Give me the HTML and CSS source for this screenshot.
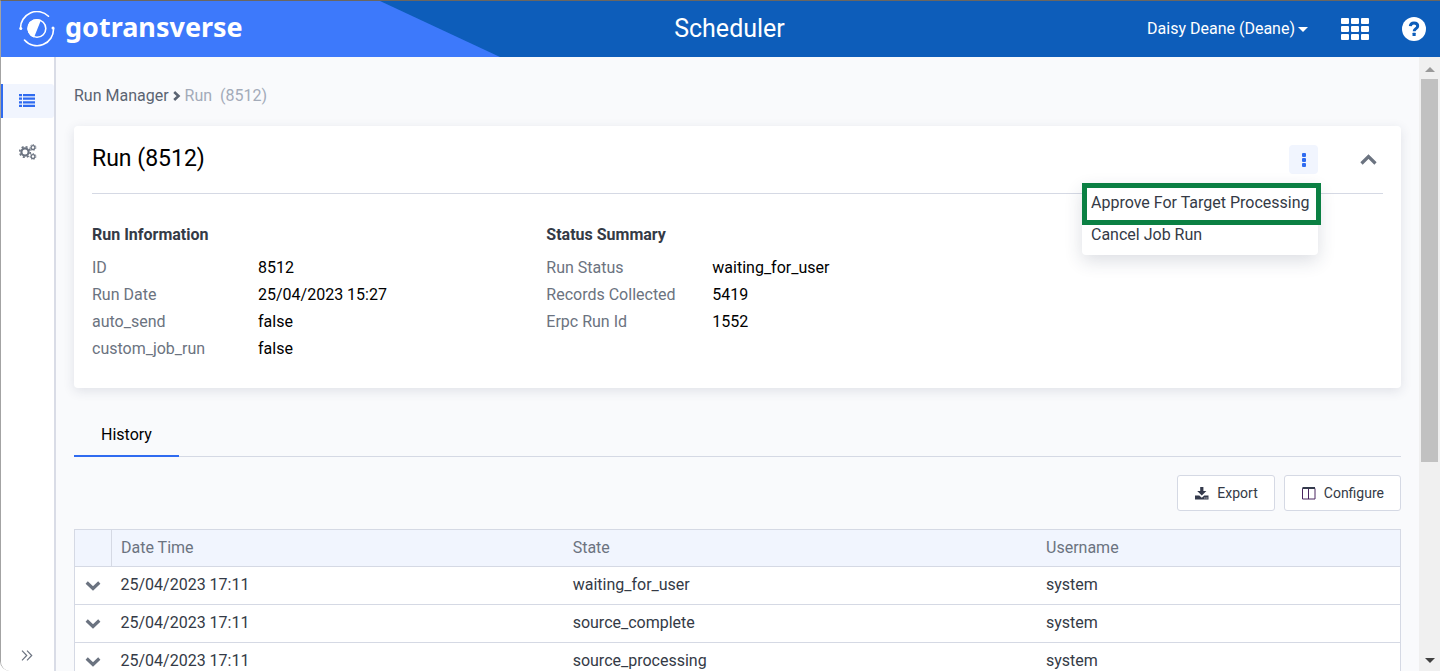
FILE: index.html
```html
<!DOCTYPE html>
<html lang="en">
<head>
<meta charset="utf-8">
<title>Scheduler</title>
<link rel="stylesheet" href="styles.css">
</head>
<body>
<div class="app">
  <header class="topbar">
    <a class="brand" href="#" aria-label="gotransverse">
      <svg class="brand-mark" viewBox="0 0 36 36" fill="none" stroke="#fff" stroke-width="1.6" stroke-linecap="round">
        <path d="M1.500 17.500A16.500 16.500 0 0 1 29.500 5.200"/>
        <path d="M34.500 17.500A16.500 16.500 0 0 1 5.500 29"/>
        <circle cx="1.800" cy="17.500" r="1.500" fill="#fff" stroke="none"/>
        <circle cx="34" cy="17" r="1.500" fill="#fff" stroke="none"/>
        <circle cx="18" cy="17.500" r="8.800"/>
        <path d="M22 8.900A9.500 9.500 0 1 0 15 26.500Z" fill="#fff" stroke="none"/>
      </svg>
      <span class="brand-name">gotransverse</span>
    </a>
    <h1 class="app-title">Scheduler</h1>
    <div class="topbar-tools">
      <button class="user-button" type="button">Daisy Deane (Deane)<span class="caret"></span></button>
      <button class="icon-button" type="button" aria-label="Applications">
        <svg width="28" height="22" viewBox="0 0 28 22" fill="#fff">
          <rect width="8" height="6" rx="1"/><rect x="10" width="8" height="6" rx="1"/><rect x="20" width="8" height="6" rx="1"/>
          <rect y="8" width="8" height="6" rx="1"/><rect x="10" y="8" width="8" height="6" rx="1"/><rect x="20" y="8" width="8" height="6" rx="1"/>
          <rect y="16" width="8" height="6" rx="1"/><rect x="10" y="16" width="8" height="6" rx="1"/><rect x="20" y="16" width="8" height="6" rx="1"/>
        </svg>
      </button>
      <button class="icon-button" type="button" aria-label="Help">
        <svg width="24" height="24" viewBox="0 0 24 24">
          <circle cx="12" cy="12" r="12" fill="#fff"/>
          <path d="M8.300 9.200C8.500 6.800 10 5.900 12 5.900c2.200 0 3.700 1.300 3.700 3.100 0 2.600-3.500 2.700-3.500 5.200" fill="none" stroke="#0d5dba" stroke-width="3"/>
          <rect x="10.500" y="15.700" width="3.200" height="3.200" rx=".5" fill="#0d5dba"/>
        </svg>
      </button>
    </div>
  </header>

  <div class="body">
    <nav class="sidebar" aria-label="Main">
      <div class="side-links">
        <a class="side-link active" href="#" aria-label="Runs">
          <svg width="16" height="13" viewBox="0 0 16 13" fill="#2f6bf0">
            <path d="M0 0h3v2.200H0zM4 0h12v2.200H4zM0 3.600h3v2.200H0zM4 3.600h12v2.200H4zM0 7.200h3v2.200H0zM4 7.200h12v2.200H4zM0 10.800h3V13H0zM4 10.800h12V13H4z"/>
          </svg>
        </a>
        <a class="side-link" href="#" aria-label="Settings">
          <svg width="18" height="16" viewBox="0 0 18 16" fill="none" stroke="#6b7380">
            <circle cx="6" cy="8" r="3.600" stroke-width="2.200"/>
            <circle cx="6" cy="8" r="5.300" stroke-width="1.600" stroke-dasharray="2.080 2.080"/>
            <circle cx="14" cy="3.500" r="1.900" stroke-width="1.300"/>
            <circle cx="14" cy="3.500" r="2.900" stroke-width="1" stroke-dasharray="1.300 1.300"/>
            <circle cx="14" cy="12.500" r="1.900" stroke-width="1.300"/>
            <circle cx="14" cy="12.500" r="2.900" stroke-width="1" stroke-dasharray="1.300 1.300"/>
          </svg>
        </a>
      </div>
      <button class="side-expand" type="button" aria-label="Expand menu">
        <svg width="12" height="11" viewBox="0 0 12 11" fill="none" stroke="#6b7380" stroke-width="1.200"><path d="M1 .7l4.700 4.800L1 10.300M6 .7l4.700 4.800L6 10.300"/></svg>
      </button>
    </nav>

    <main class="content">
      <nav class="breadcrumb" aria-label="Breadcrumb">
        <a href="#">Run Manager</a>
        <svg width="8" height="10" viewBox="0 0 8 10" fill="none" stroke="#5b6472" stroke-width="2.600"><path d="M1.200 1l4.300 4-4.300 4"/></svg>
        <span class="current">Run &nbsp;(8512)</span>
      </nav>

      <section class="card">
        <div class="card-head">
          <h2>Run (8512)</h2>
          <div class="card-tools">
            <div class="menu-wrap">
              <button class="kebab" type="button" aria-label="Actions">
                <svg width="4" height="14" viewBox="0 0 4 14" fill="#2f6bf0"><rect width="4" height="4" rx="1"/><rect y="5" width="4" height="4" rx="1"/><rect y="10" width="4" height="4" rx="1"/></svg>
              </button>
              <div class="menu">
                <button class="menu-item highlighted" type="button">Approve For Target Processing</button>
                <button class="menu-item" type="button">Cancel Job Run</button>
              </div>
            </div>
            <button class="collapse" type="button" aria-label="Collapse">
              <svg width="17" height="11" viewBox="0 0 17 11" fill="none" stroke="#6b7380" stroke-width="3.200"><path d="M1.500 9.500l7-7 7 7"/></svg>
            </button>
          </div>
        </div>
        <div class="summary">
          <div>
            <h3>Run Information</h3>
            <dl>
              <dt>ID</dt><dd>8512</dd>
              <dt>Run Date</dt><dd>25/04/2023 15:27</dd>
              <dt>auto_send</dt><dd>false</dd>
              <dt>custom_job_run</dt><dd>false</dd>
            </dl>
          </div>
          <div>
            <h3>Status Summary</h3>
            <dl>
              <dt>Run Status</dt><dd>waiting_for_user</dd>
              <dt>Records Collected</dt><dd>5419</dd>
              <dt>Erpc Run Id</dt><dd>1552</dd>
            </dl>
          </div>
        </div>
      </section>

      <div class="tabs" role="tablist">
        <button class="tab" type="button" role="tab" aria-selected="true">History</button>
      </div>

      <div class="actions">
        <button class="action" type="button">
          <svg width="14" height="13" viewBox="0 0 14 13" fill="#343a4c"><path d="M5.200 0h3.200v4h3L6.800 8.500 2.200 4h3z"/><path fill-rule="evenodd" d="M0 8.600h4.300l2.500 2.200 2.500-2.200H13.500V12.500H0zM9.400 10.500v1h1v-1zM11.400 10.500v1h1v-1z"/></svg>
          Export
        </button>
        <button class="action" type="button">
          <svg width="14" height="13" viewBox="0 0 14 13" fill="none" stroke="#4a2660"><path d="M.5 1.500h12.500v10.500H.5zM6.500 1.500V12"/><path d="M.5 1h12.500" stroke="#343a4c" stroke-width="2"/></svg>
          Configure
        </button>
      </div>

      <table class="grid">
        <colgroup><col class="col-toggle"><col class="col-date"><col class="col-state"><col></colgroup>
        <thead>
          <tr><th class="toggle-head"></th><th>Date Time</th><th>State</th><th>Username</th></tr>
        </thead>
        <tbody>
          <tr><td class="toggle"><button type="button" aria-label="Expand row"><svg width="16" height="10" viewBox="0 0 16 10" fill="none" stroke="#6b7380" stroke-width="3.200"><path d="M1.700 1.500L8 7.500l6.300-6"/></svg></button></td><td>25/04/2023 17:11</td><td>waiting_for_user</td><td>system</td></tr>
          <tr><td class="toggle"><button type="button" aria-label="Expand row"><svg width="16" height="10" viewBox="0 0 16 10" fill="none" stroke="#6b7380" stroke-width="3.200"><path d="M1.700 1.500L8 7.500l6.300-6"/></svg></button></td><td>25/04/2023 17:11</td><td>source_complete</td><td>system</td></tr>
          <tr><td class="toggle"><button type="button" aria-label="Expand row"><svg width="16" height="10" viewBox="0 0 16 10" fill="none" stroke="#6b7380" stroke-width="3.200"><path d="M1.700 1.500L8 7.500l6.300-6"/></svg></button></td><td>25/04/2023 17:11</td><td>source_processing</td><td>system</td></tr>
        </tbody>
      </table>
    </main>

    <div class="scrollbar" aria-hidden="true">
      <svg width="10" height="6" viewBox="0 0 10 6" fill="#9a9a9a"><path d="M0 6l5-5 5 5z"/></svg>
      <div class="track"><div class="thumb"></div></div>
      <svg width="10" height="6" viewBox="0 0 10 6" fill="#404040"><path d="M0 0l5 5 5-5z"/></svg>
    </div>
  </div>
</div>
</body>
</html>
```
FILE: styles.css
```css
* { box-sizing: border-box; }
html, body { height: 100%; }
body {
  margin: 0;
  overflow: hidden;
  background: #fff;
  color: #343a46;
  font: 16px/24px Roboto, "Liberation Sans", sans-serif;
}
h1, h2, h3, dl, dd { margin: 0; }
a { color: inherit; text-decoration: none; }
button {
  padding: 0;
  border: 0;
  background: none;
  color: inherit;
  font: inherit;
  cursor: pointer;
}
svg { display: block; flex: none; }

.app {
  display: flex;
  flex-direction: column;
  height: 100vh;
  margin-right: 2px;
  border-top: 1px solid #6b6660;
  border-left: 1px solid #a3a3a3;
  border-bottom-left-radius: 10px;
  overflow: hidden;
}

.topbar {
  display: grid;
  grid-template-columns: 1fr auto 1fr;
  align-items: center;
  flex: none;
  height: 56px;
  padding: 0 14px 0 18px;
  background: #0d5dba;
  color: #fff;
  position: relative;
}
.topbar::before {
  content: "";
  position: absolute;
  inset: 0 auto 0 0;
  width: 499px;
  background: #3d79fb;
  clip-path: polygon(0 0, 379px 0, 100% 100%, 0 100%);
}
.brand { display: flex; align-items: center; gap: 10px; position: relative; }
.brand-mark { width: 36px; height: 36px; }
.brand-name { padding-bottom: 4px; font: 700 27px/36px "Noto Sans", sans-serif; }
.app-title { padding-left: 14px; font-size: 25px; font-weight: 400; line-height: 32px; }
.topbar-tools { display: flex; align-items: center; justify-content: flex-end; gap: 33px; }
.user-button { display: flex; align-items: center; gap: 3px; }
.caret { border: 5px solid transparent; border-top-color: #fff; border-bottom: 0; }

.body { display: flex; flex: 1; min-height: 0; }

.sidebar {
  display: flex;
  flex-direction: column;
  justify-content: space-between;
  flex: none;
  width: 55px;
  padding: 27px 0 10px;
  border-right: 2px solid #d9dce6;
  background: #fff;
}
.side-links { display: grid; gap: 18px; }
.side-link {
  display: flex;
  align-items: center;
  height: 34px;
  padding: 0 0 2px 16px;
  border-left: 2px solid transparent;
}
.side-link.active { border-left-color: #2f6bf0; background: #f1f5fe; border-radius: 0 3px 3px 0; }
.side-expand { padding-left: 20px; }

.content {
  flex: 1;
  min-width: 0;
  padding: 27px 18px 0;
  background: #f9fafc;
  overflow: hidden;
}
.breadcrumb { display: flex; align-items: center; gap: 4px; margin-bottom: 18px; color: #5b6472; }
.breadcrumb .current { color: #a3abb9; }

.card {
  padding: 0 18px 25px;
  border-radius: 4px;
  background: #fff;
  box-shadow: 0 3px 12px rgba(40, 50, 80, .12);
}
.card-head {
  display: flex;
  align-items: center;
  justify-content: space-between;
  height: 68px;
  border-bottom: 1px solid #d5d9e4;
}
.card-head h2 { padding-bottom: 1px; color: #000; font-size: 23px; font-weight: 400; line-height: 32px; }
.card-tools { display: flex; align-items: center; gap: 42px; padding-right: 6px; }
.menu-wrap { position: relative; }
.kebab {
  display: flex;
  align-items: center;
  justify-content: center;
  width: 29px;
  height: 29px;
  border-radius: 4px;
  background: #f1f5fe;
}
.menu {
  position: absolute;
  top: 39px;
  right: 0;
  z-index: 2;
  width: 236px;
  padding: 3px 0 4px;
  border-radius: 4px;
  background: #fff;
  box-shadow: 0 6px 18px rgba(40, 50, 80, .16);
}
.menu-item {
  display: block;
  position: relative;
  width: 100%;
  height: 32px;
  padding: 0 9px;
  text-align: left;
  white-space: nowrap;
}
.menu-item.highlighted::after {
  content: "";
  position: absolute;
  inset: -4px -3px -6px 0;
  border: 5px solid #0b8043;
}

.summary {
  display: grid;
  grid-template-columns: repeat(3, 1fr);
  gap: 72px;
  padding-top: 29px;
}
.summary h3 { margin-bottom: 7px; font-size: 16px; font-weight: 700; }
.summary dl { display: grid; grid-template-columns: 166px auto; line-height: 27px; }
.summary dt { color: #6b7380; }
.summary dd { color: #000; }
.summary { padding-bottom: 1px; }

.tabs { display: flex; margin-top: 22px; border-bottom: 1px solid #d5d9e4; }
.tab {
  height: 47px;
  margin-bottom: -1px;
  padding: 4px 27px 0;
  border-bottom: 2px solid #2f6bf0;
  color: #000;
}

.actions { display: flex; justify-content: flex-end; gap: 9px; margin: 18px 0; }
.action {
  display: flex;
  align-items: center;
  gap: 8px;
  height: 36px;
  padding: 0 16px 0 17px;
  border: 1px solid #d5d9e4;
  border-radius: 3px;
  background: #fff;
  font-size: 14px;
}

.grid { width: 100%; border-collapse: collapse; table-layout: fixed; background: #fff; }
.grid tr { height: 38px; border: 1px solid #d5d9e4; }
.grid thead tr { height: 37px; background: #f1f5fe; }
.grid th, .grid td { padding: 0 9px; text-align: left; }
.grid td { padding-bottom: 2px; }
.grid th { color: #6b7380; font-weight: 400; }
.grid .toggle-head { border-right: 1px solid #d5d9e4; }
.grid .toggle button { display: block; padding: 2px 1px 0; }
.col-toggle { width: 37px; }
.col-date { width: 34.1%; }
.col-state { width: 35.7%; }

.scrollbar {
  display: flex;
  flex-direction: column;
  align-items: center;
  flex: none;
  width: 21px;
  padding: 9px 0 7px;
  background: #f0f0f0;
}
.track { flex: 1; width: 17px; padding: 7px 0; }
.thumb { height: 67%; background: #c1c1c1; }
```
